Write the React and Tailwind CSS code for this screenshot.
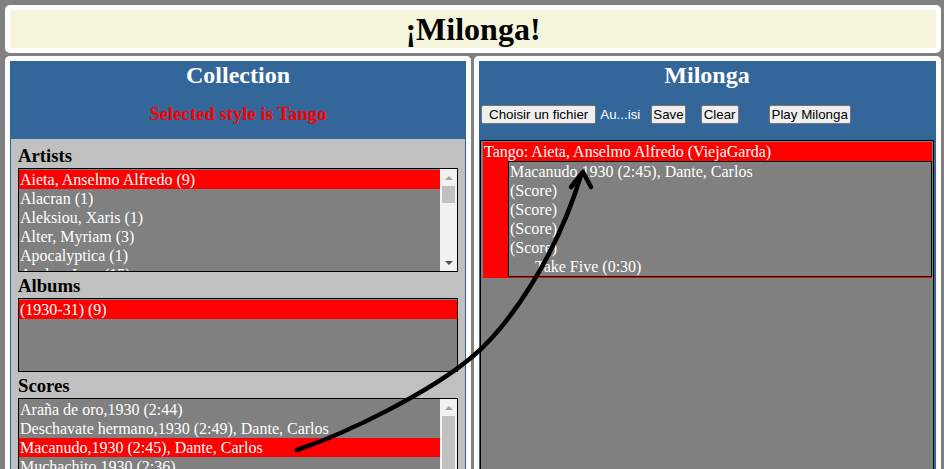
import React from "react";

const artists = [
  "Aieta, Anselmo Alfredo (9)",
  "Alacran (1)",
  "Aleksiou, Xaris (1)",
  "Alter, Myriam (3)",
  "Apocalyptica (1)",
  "Arolas, Juan (15)",
];

const albums = ["(1930-31) (9)"];

const scores = [
  "Araña de oro,1930 (2:44)",
  "Deschavate hermano,1930 (2:49), Dante, Carlos",
  "Macanudo,1930 (2:45), Dante, Carlos",
  "Muchachito,1930 (2:36)",
  "Pobre gallo bataraz,1930 (2:50)",
];

function Scrollbar({ thumbClass }) {
  return (
    <div className="w-[17px] shrink-0 bg-[#f1f1f1] flex flex-col">
      <div className="h-[17px] flex items-center justify-center">
        <div className="w-0 h-0 border-x-[4px] border-x-transparent border-b-[4px] border-b-[#a3a3a3]" />
      </div>
      <div className="flex-1 flex flex-col">
        <div className={`mx-[2px] bg-[#c1c1c1] ${thumbClass}`} />
      </div>
      <div className="h-[17px] flex items-center justify-center">
        <div className="w-0 h-0 border-x-[4px] border-x-transparent border-t-[4px] border-t-[#505050]" />
      </div>
    </div>
  );
}

function ListBox({ items, selected, heightClass, scroll, thumbClass }) {
  return (
    <div className={`mx-[7px] mt-[1px] flex border border-black bg-[#808080] overflow-hidden ${heightClass}`}>
      <div className="flex-1 pt-[1px]">
        {items.map((item, i) => (
          <div
            key={item}
            className={`pl-[1px] leading-[19px] h-[19px] whitespace-nowrap text-white ${i === selected ? "bg-[#ff0000]" : ""}`}
          >
            {item}
          </div>
        ))}
      </div>
      {scroll && <Scrollbar thumbClass={thumbClass} />}
    </div>
  );
}

function Heading({ children }) {
  return (
    <h3 className="pl-[7px] mt-[3px] text-[18.72px] leading-[22px] font-bold text-black">
      {children}
    </h3>
  );
}

function Btn({ children, className }) {
  return (
    <button
      className={`h-[19px] bg-[#efefef] border border-[#767676] rounded-[2px] text-black text-[13.33px] leading-[17px] ${className}`}
    >
      {children}
    </button>
  );
}

export default function App() {
  return (
    <div className="relative w-[944px] h-[469px] overflow-hidden bg-[#808080] pl-[5px] pr-[3px] pt-[5px] flex flex-col gap-[3px] font-['Liberation_Serif',serif] text-[16px]">
      {/* header */}
      <div className="border-[5px] border-white rounded-[5px] bg-[#f5f5dc] h-[48px] shrink-0">
        <h1 className="text-center text-[32px] leading-[38px] font-bold text-black">¡Milonga!</h1>
      </div>

      <div className="h-[440px] shrink-0 flex gap-[3px]">
        {/* collection */}
        <div className="w-[466px] border-[5px] border-b-0 border-white rounded-t-[5px] bg-[#336699] px-[1px] flex flex-col">
          <h2 className="text-center text-white font-bold text-[24px] leading-[28px]">Collection</h2>
          <div className="text-center text-[#ff0000] font-bold text-[18.72px] leading-[22px] mt-[14px] mb-[14px]">
            Selected style is Tango
          </div>
          <div className="flex-1 bg-[#c0c0c0] pt-[3px]">
            <Heading>Artists</Heading>
            <ListBox items={artists} selected={0} heightClass="h-[104px]" scroll thumbClass="h-[17px]" />
            <Heading>Albums</Heading>
            <ListBox items={albums} selected={0} heightClass="h-[74px]" />
            <Heading>Scores</Heading>
            <ListBox items={scores} selected={2} heightClass="h-[130px]" scroll thumbClass="h-[90px]" />
          </div>
        </div>

        {/* milonga */}
        <div className="flex-1 border-[5px] border-b-0 border-white rounded-t-[5px] bg-[#336699] pl-[1px] pr-[2px] flex flex-col">
          <h2 className="text-center text-white font-bold text-[24px] leading-[28px]">Milonga</h2>
          <div className="flex items-center mt-[16px] pl-[1px] font-['Liberation_Sans',Arial,sans-serif]">
            <Btn className="px-[7px]">Choisir un fichier</Btn>
            <span className="ml-[4px] text-white text-[13.33px]">Au...isi</span>
            <Btn className="ml-[11px] px-[1px]">Save</Btn>
            <Btn className="ml-[15px] px-[2px]">Clear</Btn>
            <Btn className="ml-[30px] px-[2px]">Play Milonga</Btn>
          </div>
          <div className="flex-1 mt-[15px] border border-black bg-[#808080] pl-[2px] pt-[1px] pr-[1px]">
            <div className="bg-[#ff0000] text-white pb-[1px]">
              <div className="pl-[1px] leading-[19px]">Tango: Aieta, Anselmo Alfredo (ViejaGarda)</div>
              <div className="ml-[25px] border border-black bg-[#808080]">
                <div className="pl-[1px] leading-[19px]">Macanudo,1930 (2:45), Dante, Carlos</div>
                <div className="pl-[1px] leading-[19px]">(Score)</div>
                <div className="pl-[1px] leading-[19px]">(Score)</div>
                <div className="pl-[1px] leading-[19px]">(Score)</div>
                <div className="pl-[1px] leading-[19px]">(Score)</div>
                <div className="pl-[26px] leading-[19px]">Take Five (0:30)</div>
              </div>
            </div>
          </div>
        </div>
      </div>

      {/* drag arrow overlay */}
      <svg className="absolute left-0 top-0 pointer-events-none" width="944" height="469" viewBox="0 0 944 469">
        <path
          d="M297 450 C350 432 430 392 472 357 C510 325 557 255 581 175"
          fill="none"
          stroke="black"
          strokeWidth="4.5"
          strokeLinecap="round"
        />
        <path
          d="M571 187 L583 172 L591 187"
          fill="none"
          stroke="black"
          strokeWidth="4.5"
          strokeLinecap="round"
          strokeLinejoin="round"
        />
      </svg>
    </div>
  );
}
